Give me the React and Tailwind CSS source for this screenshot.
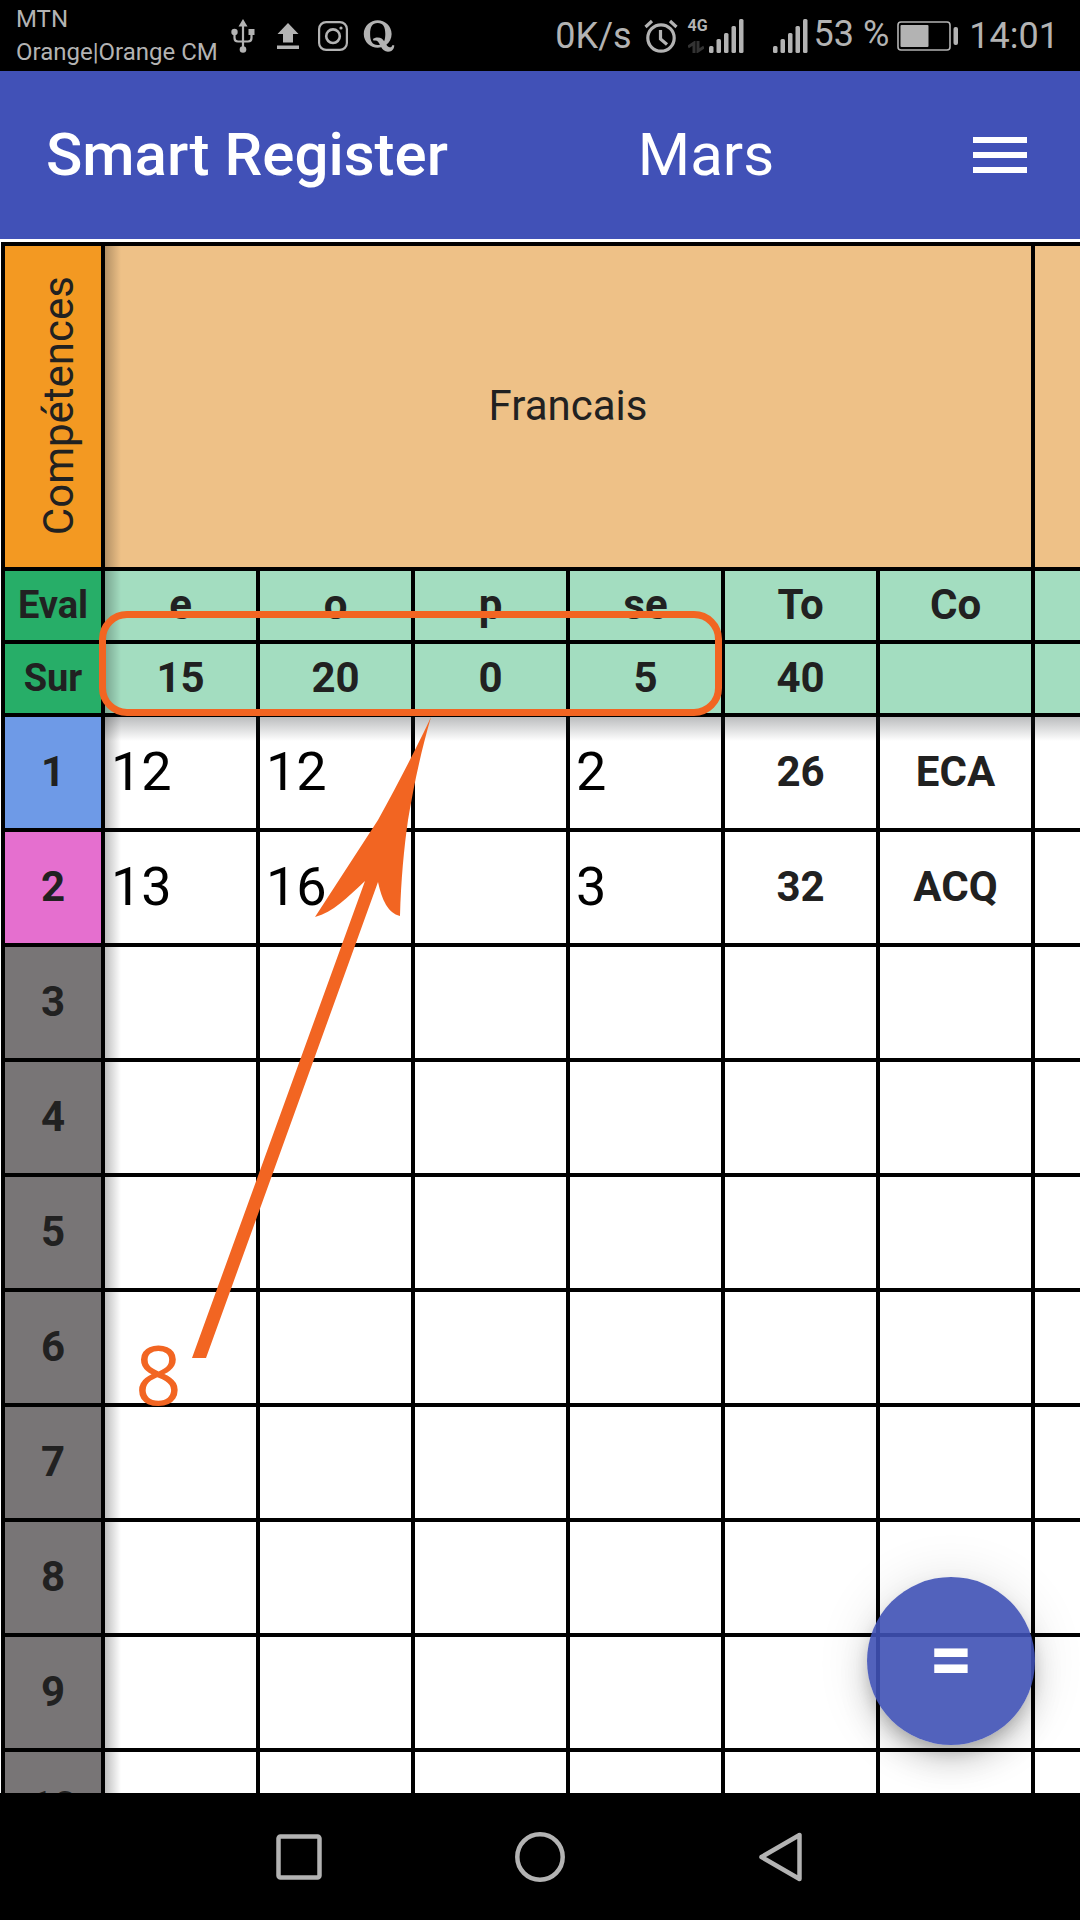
import React from "react";
import { FaQuora } from "react-icons/fa";
import { MdMenu } from "react-icons/md";

const marks = ["e", "o", "p", "se"];

const scale = ["15", "20", "0", "5"];

const pupils = [
  { id: 1, color: "bg-[#6e9ae7]", values: ["12", "12", "", "2"], total: "26", grade: "ECA" },
  { id: 2, color: "bg-[#e56fcf]", values: ["13", "16", "", "3"], total: "32", grade: "ACQ" },
  ...[3, 4, 5, 6, 7, 8, 9, 10].map((id) => ({
    id,
    color: "bg-[#787576]",
    values: ["", "", "", ""],
    total: "",
    grade: "",
  })),
];

const line = "border-r-4 border-b-4 border-black px-0 pt-0 pb-0.5";
const sideShadow =
  "relative z-10 after:absolute after:top-0 after:-bottom-1 after:left-full after:ml-1 after:w-4 after:bg-linear-to-r after:from-black/25 after:to-transparent after:content-['']";
const dropShadow =
  "relative before:absolute before:left-0 before:-right-1 before:top-full before:mt-1 before:h-6 before:bg-linear-to-b before:from-[#1e2328]/30 before:to-transparent before:content-['']";

function UsbIcon() {
  return (
    <svg viewBox="0 0 24 34" className="h-[34px] w-6" fill="none" stroke="currentColor" strokeWidth="2.2" aria-hidden="true">
      <path d="M12 6v24M3.500 13v6q0 3.500 3.500 3.500h10q3.500 0 3.500-3.500v-6" />
      <path d="M12 0l4.500 7.500h-9z" fill="currentColor" stroke="none" />
      <circle cx="3.500" cy="13" r="3.200" fill="currentColor" stroke="none" />
      <path d="M17.500 10h6v6h-6z" fill="currentColor" stroke="none" />
      <circle cx="12" cy="30.500" r="3.300" fill="currentColor" stroke="none" />
    </svg>
  );
}

function UploadIcon() {
  return (
    <svg viewBox="0 0 22 26" className="h-[26px] w-[22px]" fill="currentColor" aria-hidden="true">
      <path d="M11 0l10.500 11h-5.500v8.500h-10V11H.5zM0 22.500h22V26H0z" />
    </svg>
  );
}

function CameraIcon() {
  return (
    <svg viewBox="0 0 30 30" className="size-[30px]" fill="none" stroke="currentColor" strokeWidth="2.200" aria-hidden="true">
      <rect x="1.100" y="1.100" width="27.800" height="27.800" rx="7" />
      <circle cx="15" cy="15.200" r="6.800" strokeWidth="2.600" />
      <circle cx="23" cy="7" r="1.600" fill="currentColor" stroke="none" />
    </svg>
  );
}

function AlarmIcon() {
  return (
    <svg viewBox="0 0 34 34" className="size-[34px]" fill="none" stroke="currentColor" strokeWidth="3.200" aria-hidden="true">
      <circle cx="17" cy="19" r="13.200" />
      <path d="M1.500 8L8 2M32.500 8L26 2" />
      <path d="M16.500 11v9l6.500 5.500" />
    </svg>
  );
}

function SignalIcon() {
  return (
    <svg viewBox="0 0 35 34" className="h-[34px] w-[35px]" fill="currentColor" aria-hidden="true">
      <rect x="0" y="27" width="4.500" height="7" rx="1.500" />
      <rect x="7.500" y="20" width="4.500" height="14" rx="1.500" />
      <rect x="15" y="14" width="4.500" height="20" rx="1.500" />
      <rect x="22.500" y="7" width="4.500" height="27" rx="1.500" />
      <rect x="30" y="0" width="4.500" height="34" rx="1.500" />
    </svg>
  );
}

function BatteryIcon() {
  return (
    <svg viewBox="0 0 62 30" className="h-[30px] w-[62px]" aria-hidden="true">
      <rect x="1" y="1" width="52" height="28" rx="3" fill="none" stroke="currentColor" strokeWidth="1.600" />
      <rect x="3.500" y="4" width="28" height="22" rx="1" fill="currentColor" />
      <rect x="56.500" y="6" width="4.500" height="18" rx="2" fill="currentColor" />
    </svg>
  );
}

function StatusBar() {
  return (
    <div className="flex h-[71px] shrink-0 items-center justify-between bg-black pr-[21px] pl-4 text-[#b3b3b3]">
      <div className="flex items-center">
        <div className="w-[215px] text-2xl leading-[33px] whitespace-nowrap">
          <div>MTN</div>
          <div>Orange|Orange CM</div>
        </div>
        <UsbIcon />
        <div className="ml-[22px] flex items-center gap-[19px]">
          <UploadIcon />
          <CameraIcon />
          <FaQuora className="-ml-1.5 size-9" aria-hidden="true" />
        </div>
      </div>
      <div className="flex items-center text-4xl">
        <span>0K/s</span>
        <span className="ml-3"><AlarmIcon /></span>
        <div className="ml-2.5 flex h-[34px] w-[21px] flex-col justify-between">
          <span className="text-base leading-[14px] font-bold">4G</span>
          <svg viewBox="0 0 16 12" className="h-3 w-4" fill="none" stroke="#333333" strokeWidth="3" aria-hidden="true">
            <path d="M6 12V2L0 6M10 0v10l6-4" />
          </svg>
        </div>
        <SignalIcon />
        <span className="ml-[29px]"><SignalIcon /></span>
        <span className="ml-1.5 pb-1">53 %</span>
        <span className="ml-2"><BatteryIcon /></span>
        <span className="ml-2.5">14:01</span>
      </div>
    </div>
  );
}

function AppBar() {
  return (
    <header className="flex h-[168px] shrink-0 items-center justify-between bg-[#4151b7] pr-11 pl-[46px] text-6xl text-white">
      <h1 className="font-medium">Smart Register</h1>
      <span>Mars</span>
      <button type="button" aria-label="Menu">
        <MdMenu className="size-[72px]" />
      </button>
    </header>
  );
}

function Register() {
  return (
    <table className="w-[1185px] table-fixed border-separate border-spacing-0 border-t-4 border-l-4 border-black text-[42px] leading-[48px] text-[#212121]">
      <colgroup>
        <col className="w-[100px]" />
        <col className="w-[155px]" />
        <col className="w-[155px]" />
        <col className="w-[155px]" />
        <col className="w-[155px]" />
        <col className="w-[155px]" />
        <col className="w-[155px]" />
        <col className="w-[155px]" />
      </colgroup>
      <thead>
        <tr className="h-[325px]">
          <th scope="col" className={`${line} ${sideShadow} bg-[#f39922] font-normal`}>
            <span className="inline-block rotate-180 pr-3 align-middle [writing-mode:vertical-rl]">Compétences</span>
          </th>
          <th scope="colgroup" colSpan={6} className={`${line} bg-[#eec187] font-normal`}>
            Francais
          </th>
          <th className={`${line} bg-[#eec187]`} />
        </tr>
        <tr className="h-[73px]">
          <th scope="row" className={`${line} ${sideShadow} bg-[#27ae68] text-[38px]`}>Eval</th>
          {[...marks, "To", "Co", ""].map((label, i) => (
            <th key={i} scope="col" className={`${line} bg-[#a3ddc0]`}>{label}</th>
          ))}
        </tr>
        <tr className="h-[73px]">
          <th scope="row" className={`${line} ${sideShadow} bg-[#27ae68] text-[38px]`}>Sur</th>
          {[...scale, "40", "", ""].map((label, i) => (
            <td key={i} className={`${line} ${dropShadow} bg-[#a3ddc0] text-center font-bold`}>{label}</td>
          ))}
        </tr>
      </thead>
      <tbody>
        {pupils.map((pupil) => (
          <tr key={pupil.id} className="h-[115px]">
            <th scope="row" className={`${line} ${sideShadow} ${pupil.color}`}>{pupil.id}</th>
            {pupil.values.map((value, i) => (
              <td key={i} className={line}>
                <input
                  type="text"
                  inputMode="numeric"
                  defaultValue={value}
                  aria-label={`${marks[i]} ${pupil.id}`}
                  className="block h-[109px] w-full bg-transparent pl-1.5 text-[54px] text-black"
                />
              </td>
            ))}
            <td className={`${line} text-center font-bold`}>{pupil.total}</td>
            <td className={`${line} text-center font-bold`}>{pupil.grade}</td>
            <td className={line} />
          </tr>
        ))}
      </tbody>
    </table>
  );
}

function Callout() {
  return (
    <div className="pointer-events-none absolute inset-0 z-20 text-[#f26522]">
      <div className="absolute top-[372px] left-[99px] h-[105px] w-[623px] rounded-[28px] border-[7px] border-[#f26522]" />
      <svg viewBox="190 717 242 642" className="absolute top-[478px] left-[190px] h-[642px] w-[242px]" fill="currentColor" aria-hidden="true">
        <path d="M431 717C420 741 400 780 378 820L315 917C333 912 347 898 365 881L192 1358H206L378 882C382 900 388 913 400 916C401 880 404 848 408 820C413 790 420 755 431 717Z" />
      </svg>
      <span className="absolute top-[1093px] left-[135px] font-['Open_Sans',sans-serif] text-[82px] leading-none font-medium">8</span>
    </div>
  );
}

function NavigationBar() {
  return (
    <nav className="flex h-[127px] shrink-0 items-center justify-center bg-black text-[#b3b3b3]">
      <button type="button" aria-label="Recent apps" className="flex w-[241px] justify-center">
        <svg viewBox="0 0 50 50" className="size-[50px]" fill="none" stroke="currentColor" strokeWidth="4.500">
          <rect x="4.500" y="4.500" width="41" height="41" rx="2" />
        </svg>
      </button>
      <button type="button" aria-label="Home" className="flex w-[241px] justify-center">
        <svg viewBox="0 0 50 50" className="size-[50px]" fill="none" stroke="currentColor" strokeWidth="4.500">
          <circle cx="25" cy="25" r="22.700" />
        </svg>
      </button>
      <button type="button" aria-label="Back" className="flex w-[241px] justify-center">
        <svg viewBox="0 0 50 50" className="size-[50px]" fill="none" stroke="currentColor" strokeWidth="4.500" strokeLinejoin="round">
          <path d="M43.500 3v44L5.500 25z" />
        </svg>
      </button>
    </nav>
  );
}

export default function App() {
  return (
    <div className="flex h-screen flex-col overflow-hidden bg-white font-[Roboto,sans-serif]">
      <StatusBar />
      <AppBar />
      <main className="relative min-h-0 flex-1">
        <div className="relative h-full overflow-auto pt-[3px] pl-px [scrollbar-width:none]">
          <Register />
          <Callout />
        </div>
        <button
          type="button"
          aria-label="Calculer"
          className="absolute right-[45px] bottom-12 z-30 flex size-[168px] items-center justify-center rounded-full bg-[#3f51b5]/90 pb-1 text-[76px] leading-none font-bold text-white shadow-[0_9px_15px_-3px_rgba(0,0,0,0.2),0_18px_30px_rgba(0,0,0,0.14),0_3px_54px_rgba(0,0,0,0.12)]"
        >
          =
        </button>
      </main>
      <NavigationBar />
    </div>
  );
}
